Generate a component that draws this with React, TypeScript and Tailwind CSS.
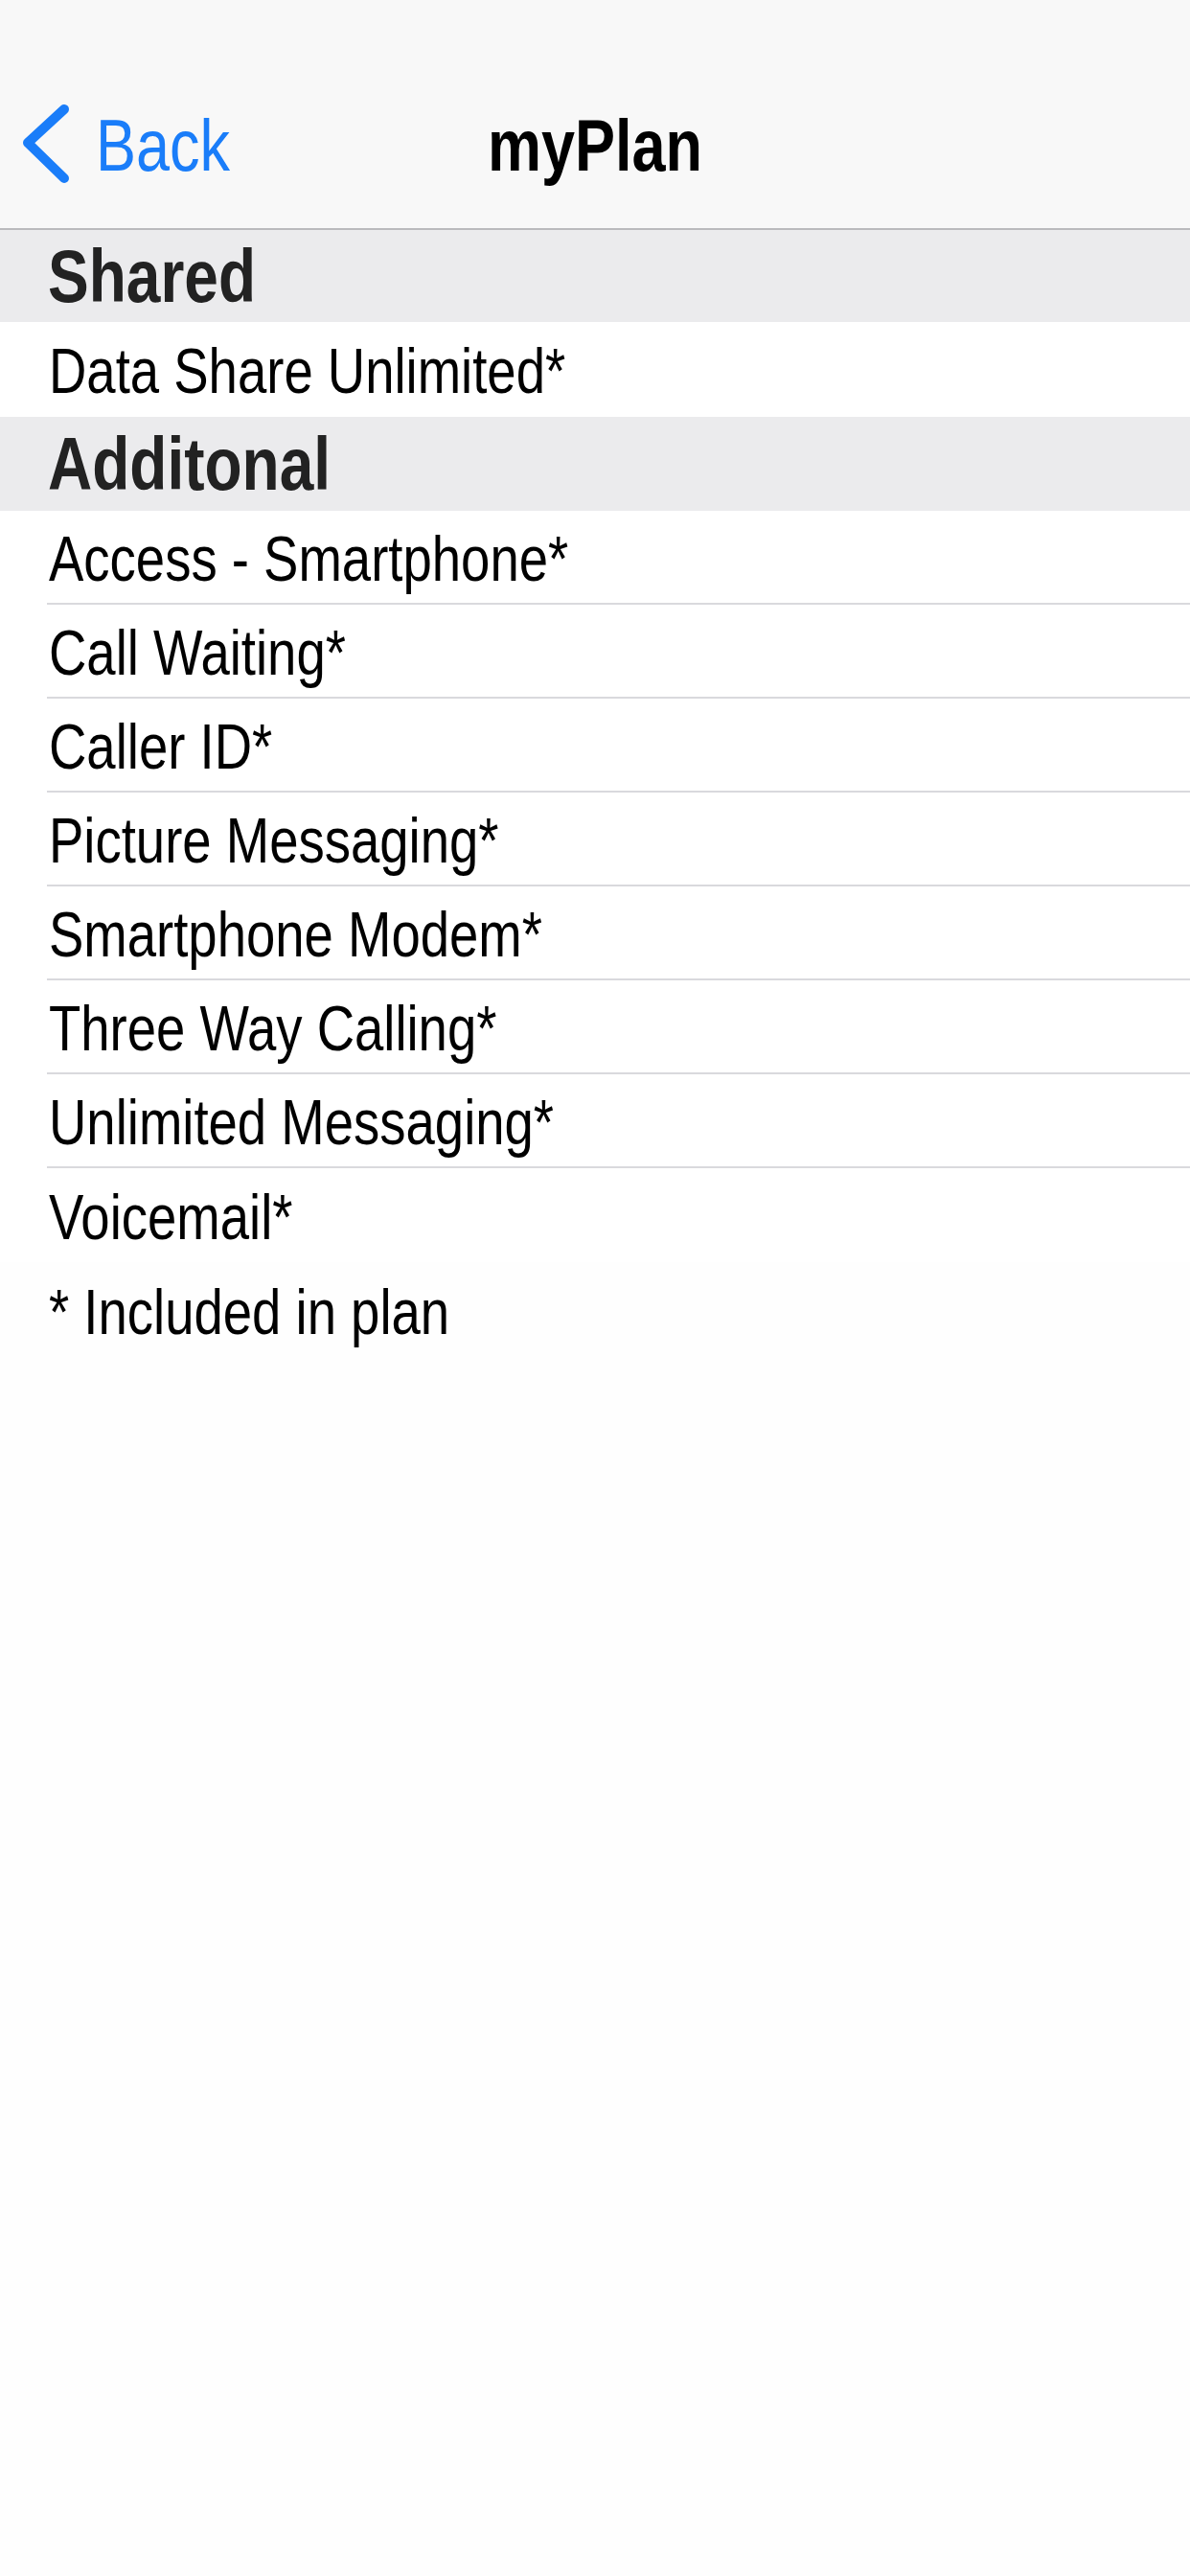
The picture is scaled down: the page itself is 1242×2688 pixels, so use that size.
import React from "react";

const font = { fontFamily: '"Liberation Sans", Arial, Helvetica, sans-serif' };

function SectionHeader({ title, h }: { title: string; h: string }) {
  return (
    <div className={`${h} bg-[#ebebed] flex items-center pl-[50px]`}>
      <span className="inline-block scale-y-[1.217] text-[64px] leading-none font-bold text-[#222222]">
        {title}
      </span>
    </div>
  );
}

function Row({ label, last }: { label: string; last?: boolean }) {
  return (
    <div className="pl-[49px] bg-white">
      <div
        className={`h-[98px] flex items-center pl-[2px] pt-[6px] ${last ? "" : "border-b-2 border-[#d9d9dd]"}`}
      >
        <span className="inline-block scale-y-[1.217] text-[54.5px] leading-none text-black">
          {label}
        </span>
      </div>
    </div>
  );
}

export default function App() {
  const items = [
    "Access - Smartphone*",
    "Call Waiting*",
    "Caller ID*",
    "Picture Messaging*",
    "Smartphone Modem*",
    "Three Way Calling*",
    "Unlimited Messaging*",
    "Voicemail*",
  ];
  return (
    <div className="min-h-[2688px] w-[1242px] bg-[#fefefe]" style={font}>
      <div className="h-[240px] bg-[#f8f8f8] border-b-2 border-[#bababd] flex flex-col">
        <div className="h-[64px]" />
        <div className="h-[174px] grid grid-cols-[1fr_auto_1fr] items-center">
          <div className="flex items-center pl-[22px]">
            <svg width="54" height="84" viewBox="0 0 54 84" className="shrink-0">
              <path
                d="M45 5 L7 40 L45 77"
                fill="none"
                stroke="#1a7df9"
                strokeWidth="10"
                strokeLinecap="round"
                strokeLinejoin="round"
              />
            </svg>
            <span className="ml-[24px] inline-block scale-y-[1.217] text-[63px] leading-none text-[#1a7df9]">
              Back
            </span>
          </div>
          <span className="inline-block scale-y-[1.217] text-[63px] leading-none font-bold text-black">
            myPlan
          </span>
          <div />
        </div>
      </div>
      <SectionHeader title="Shared" h="h-[96px]" />
      <div className="pl-[51px] bg-white">
        <div className="h-[99px] flex items-center pt-[6px]">
          <span className="inline-block scale-y-[1.217] text-[54.5px] leading-none text-black">
            Data Share Unlimited*
          </span>
        </div>
      </div>
      <SectionHeader title="Additonal" h="h-[98px]" />
      {items.map((it, i) => (
        <Row key={it} label={it} last={i === items.length - 1} />
      ))}
      <div className="h-[100px] pl-[51px] flex items-center pt-[6px]">
        <span className="inline-block scale-y-[1.217] text-[54.5px] leading-none text-black">
          * Included in plan
        </span>
      </div>
    </div>
  );
}
